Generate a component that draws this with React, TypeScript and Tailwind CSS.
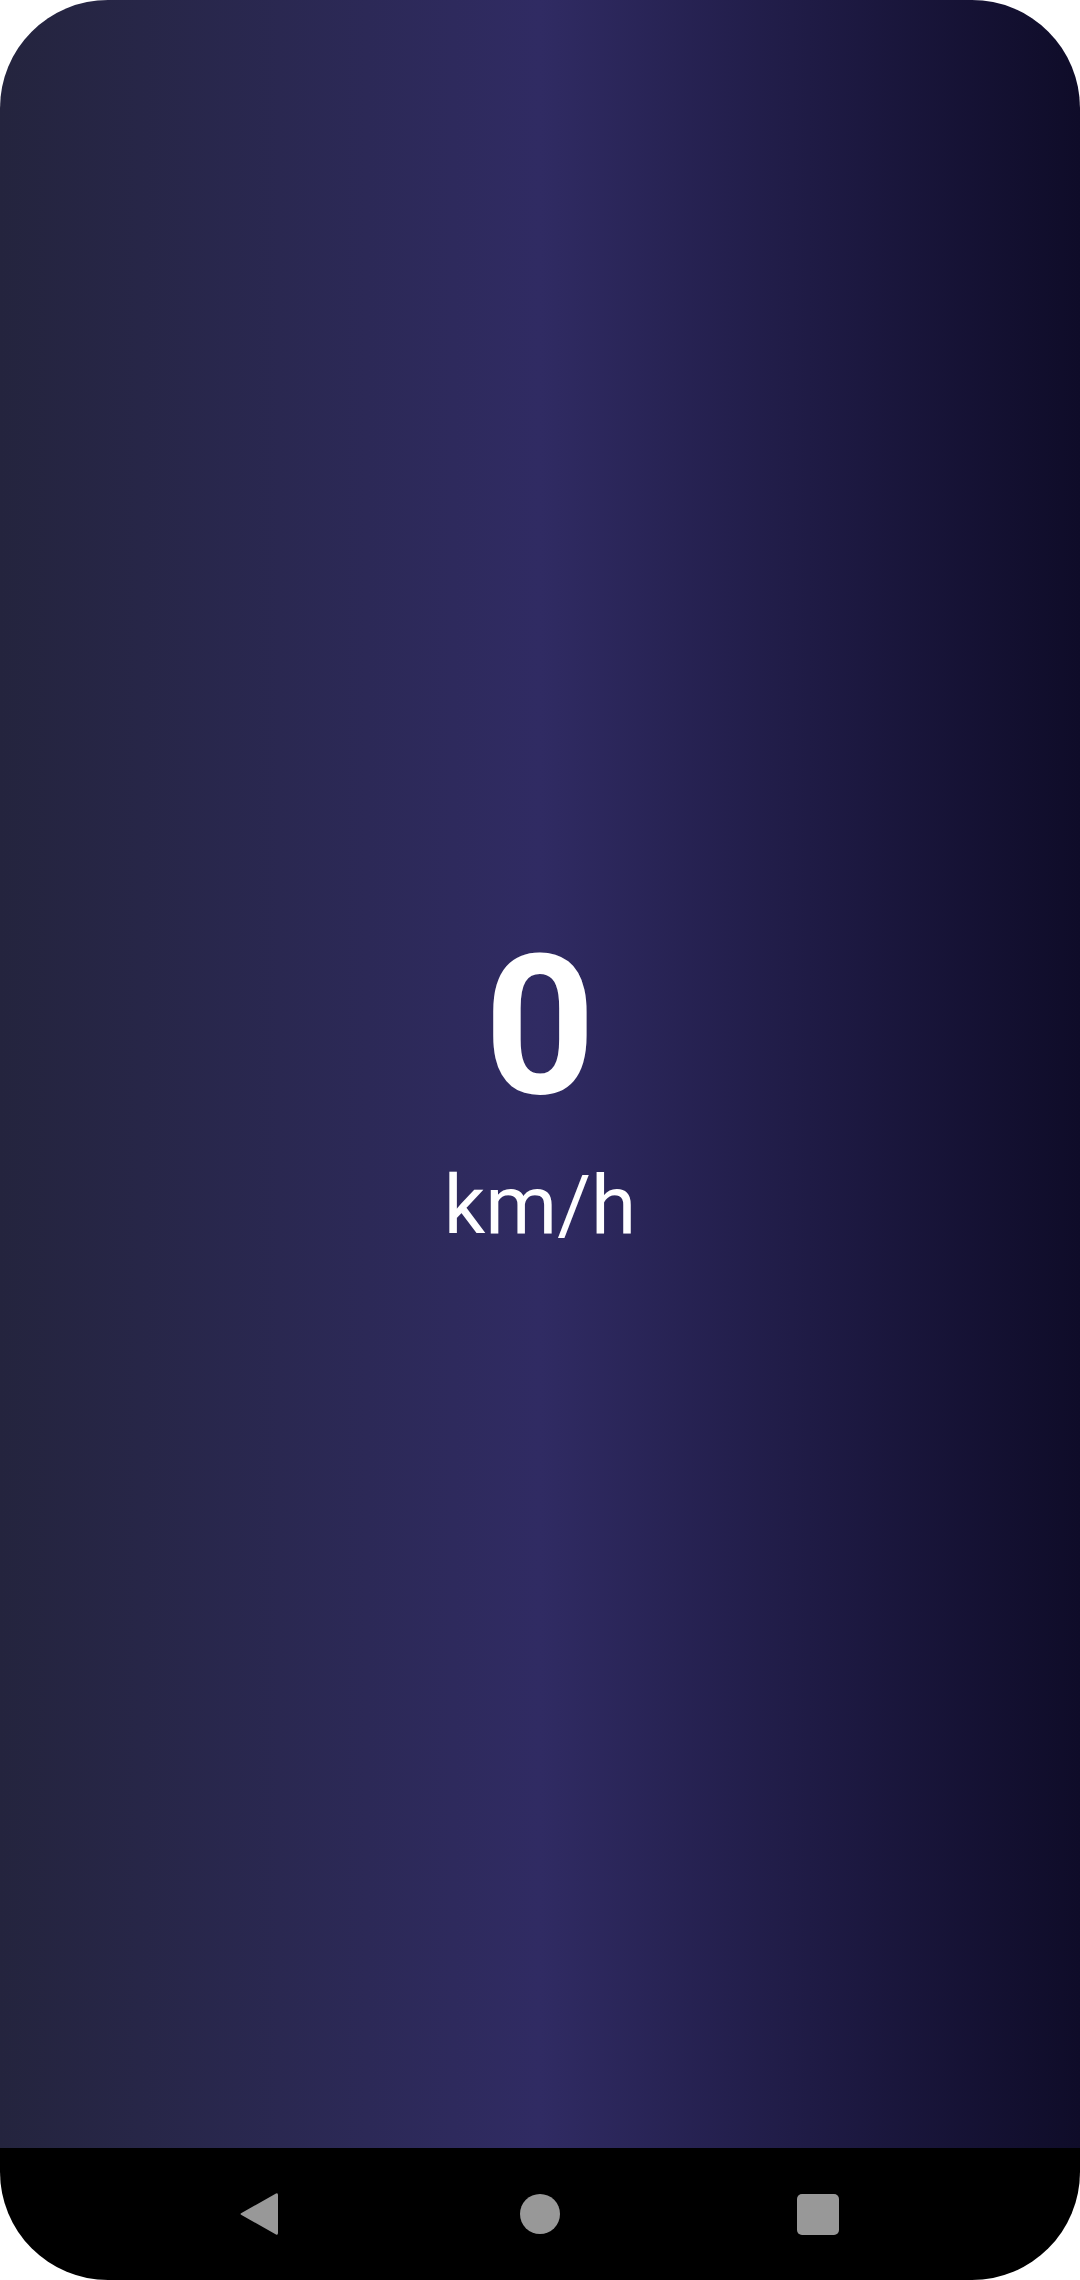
const NavBar = () => {
	return (
		<div className="h-[132px] bg-black flex items-center pl-[239px]">
			<svg width="40" height="44" viewBox="0 0 40 44">
				<path
					d="M37 1.5 Q39 0.5 39 3 L39 41 Q39 43.5 37 42.5 L2.5 23 Q0.5 22 2.5 21 Z"
					fill="#989898"
				/>
			</svg>
			<div className="w-[40px] h-[40px] rounded-full bg-[#989898] ml-[241px]" />
			<div className="w-[42px] h-[41px] rounded-[5px] bg-[#989898] ml-[237px]" />
		</div>
	);
};

const App = () => {
	return (
		<div className="w-[1080px] h-[2280px] bg-white">
			<div className="w-full h-full rounded-[108px] overflow-hidden flex flex-col">
				<div className="flex-1 bg-gradient-to-r from-[#24243e] via-[#302b63] to-[#0f0c29] flex flex-col items-center justify-center pt-[18px] text-white font-['Roboto',sans-serif]">
					<div className="text-[194px] font-bold leading-[228px]">0</div>
					<div className="text-[82px] leading-[96px] mt-[16px]">km/h</div>
				</div>
				<NavBar />
			</div>
		</div>
	);
};

export default App;
